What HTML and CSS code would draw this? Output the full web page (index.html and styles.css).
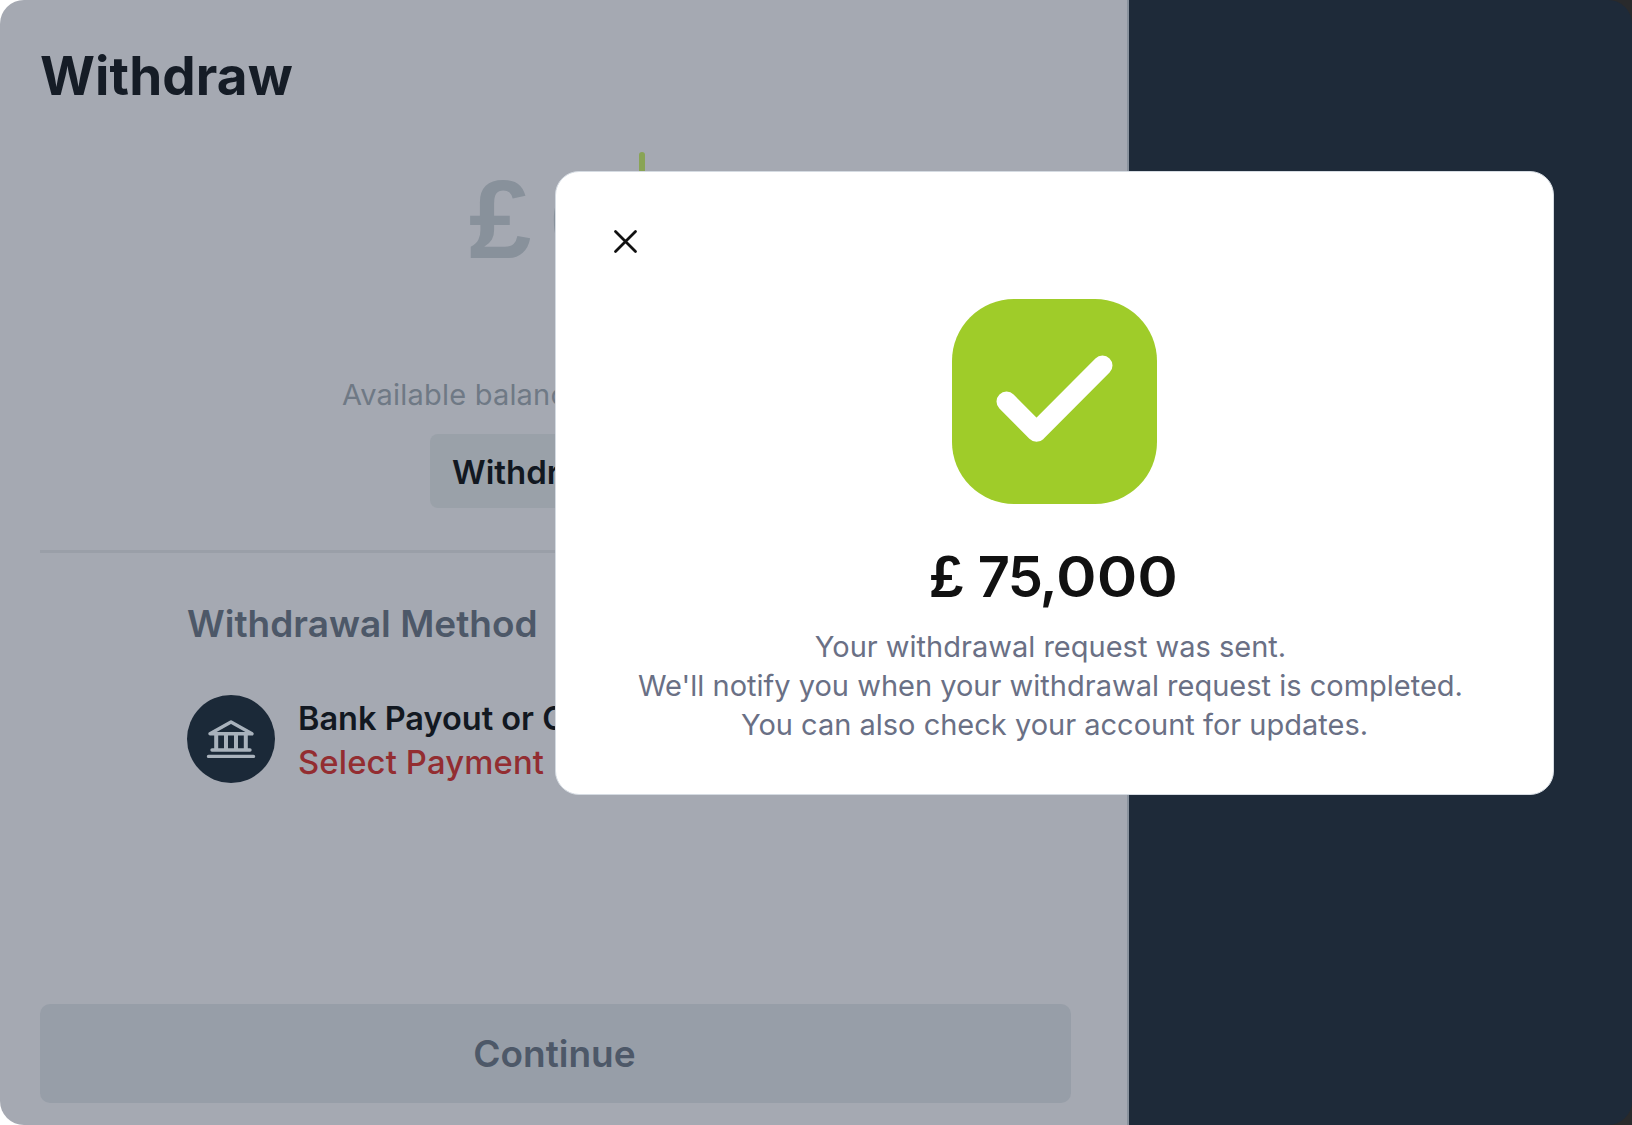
FILE: index.html
```html
<!DOCTYPE html>
<html lang="en">
<head>
<meta charset="utf-8">
<title>Withdraw</title>
<link rel="stylesheet" href="styles.css">
</head>
<body>
<div class="screen">
  <main class="pane">
    <h1 class="title">Withdraw</h1>
    <div class="entry"><span class="currency">£</span><span class="digit">0</span><span class="caret"></span></div>
    <p class="balance">Available balance</p>
    <button class="chip">Withdraw all</button>
    <hr class="rule">
    <section class="method">
      <h2 class="method-title">Withdrawal Method</h2>
      <div class="method-row">
        <span class="bank">
          <svg width="50" height="42" viewBox="0 0 50 42" fill="none" stroke="#a9b2bc" stroke-width="3.4" stroke-linecap="round" stroke-linejoin="round">
            <path d="M4 15.8 25 4l21 11.8z"/>
            <path d="M10.2 17v14M20 17v14M30 17v14M39.8 17v14" stroke-width="4" stroke-linecap="butt"/>
            <path d="M6 32h38M2.5 38.4h45"/>
          </svg>
        </span>
        <div>
          <div class="method-name">Bank Payout or Card</div>
          <div class="method-hint">Select Payment</div>
        </div>
      </div>
    </section>
    <button class="continue">Continue</button>
  </main>
  <aside class="side"></aside>
  <div class="notch"></div>
  <div class="modal" role="dialog">
    <svg class="close" width="26" height="26" viewBox="0 0 26 26" fill="none" stroke="#111" stroke-width="2.8" stroke-linecap="round"><path d="M2.5 3.5l20 20M22.5 3.5l-20 20"/></svg>
    <div class="badge">
      <svg width="205" height="205" viewBox="0 0 205 205" fill="none" stroke="#fff" stroke-width="20" stroke-linecap="round" stroke-linejoin="round"><path d="M54.5 102.5 84.5 132.8 150.5 66.5"/></svg>
    </div>
    <div class="amount"><span class="pound">£</span> 75,<span class="zeros">000</span></div>
    <p class="message"><span class="line offset">Your withdrawal request was sent.</span><span class="line offset">We'll notify you when your withdrawal request is completed.</span><span class="line">You can also check your account for updates.</span></p>
  </div>
</div>
</body>
</html>
```
FILE: styles.css
```css
* { box-sizing: border-box; margin: 0; padding: 0; }
body {
  width: 1632px;
  height: 1125px;
  overflow: hidden;
  background: linear-gradient(90deg, #fff 50%, #292a2c 50%);
  font-family: Inter, "Liberation Sans", sans-serif;
}
button { border: 0; font: inherit; display: block; text-align: left; }
.screen {
  position: relative;
  display: flex;
  height: 1125px;
  border-radius: 24px;
  overflow: hidden;
}
.pane {
  width: 1129px;
  padding: 46px 55px 0 40px;
  background: #a5a9b2;
  border-right: 2px solid #89929d;
  white-space: nowrap;
}
.side { flex: 1; background: #1e2a39; }
.notch { position: absolute; right: 0; bottom: 0; width: 8px; height: 5px; background: #000; }
.title { font-size: 53px; line-height: 60px; font-weight: 700; letter-spacing: 0.1px; color: #151c26; }
.entry { display: flex; height: 130px; margin: 46px 0 0 429px; color: #88919b; font-size: 106px; line-height: 138px; font-weight: 700; }
.currency { width: 80px; font-family: "Liberation Sans", sans-serif; font-size: 112px; line-height: 136px; }
.digit { width: 90px; }
.caret { width: 6px; height: 112px; border-radius: 3px; background: #89a455; }
.balance { margin: 95px 0 0 302px; font-size: 29px; line-height: 36px; letter-spacing: 0.2px; color: #6f7985; }
.chip { width: 250px; height: 74px; margin: 21px 0 0 390px; padding-left: 22px; border-radius: 8px; background: #9aa1a9; color: #121821; font-size: 33px; line-height: 76px; font-weight: 600; }
.rule { height: 3px; margin-top: 42px; border: 0; background: #9a9fa8; }
.method { margin: 46px 0 0 147px; }
.method-title { font-size: 37px; line-height: 50px; font-weight: 600; color: #4d5868; }
.method-row { display: flex; gap: 23px; margin-top: 46px; }
.bank { display: flex; justify-content: center; align-items: center; width: 88px; height: 88px; border-radius: 50%; background: #1b2938; }
.method-name { margin-top: 2px; font-size: 32.5px; line-height: 44px; font-weight: 600; color: #121821; }
.method-hint { font-size: 32.8px; line-height: 43px; font-weight: 500; letter-spacing: 0.15px; color: #932d31; }
.continue { width: 1031px; height: 99px; margin-top: 220px; padding-right: 2px; border-radius: 10px; background: #979ea8; color: #4d5868; font-size: 37px; font-weight: 600; text-align: center; }
.modal {
  position: absolute;
  left: 555px;
  top: 171px;
  width: 999px;
  height: 624px;
  padding: 56px 0 0;
  border: 1px solid #d5dbe2;
  border-radius: 24px;
  background: #fff;
  display: flex;
  flex-direction: column;
  align-items: center;
}
.close { align-self: flex-start; margin-left: 57px; }
.badge { width: 205px; height: 205px; margin-top: 45px; border-radius: 62px; background: #9fcc29; }
.badge svg { display: block; }
.amount { margin-top: 40px; font-size: 56px; line-height: 66px; font-weight: 600; letter-spacing: -1.8px; color: #111; white-space: nowrap; }
.pound { margin-right: 4px; font-family: "Liberation Sans", sans-serif; font-size: 59px; line-height: 1; font-weight: 700; }
.zeros { display: inline-block; margin-right: 12px; letter-spacing: 0; transform: scaleX(1.1); transform-origin: left; }
.message { margin-top: 17px; font-size: 29px; line-height: 39px; color: #6a7085; text-align: center; white-space: nowrap; }
.line { display: block; }
.offset { margin: 0 7px 0 -1px; }
```
